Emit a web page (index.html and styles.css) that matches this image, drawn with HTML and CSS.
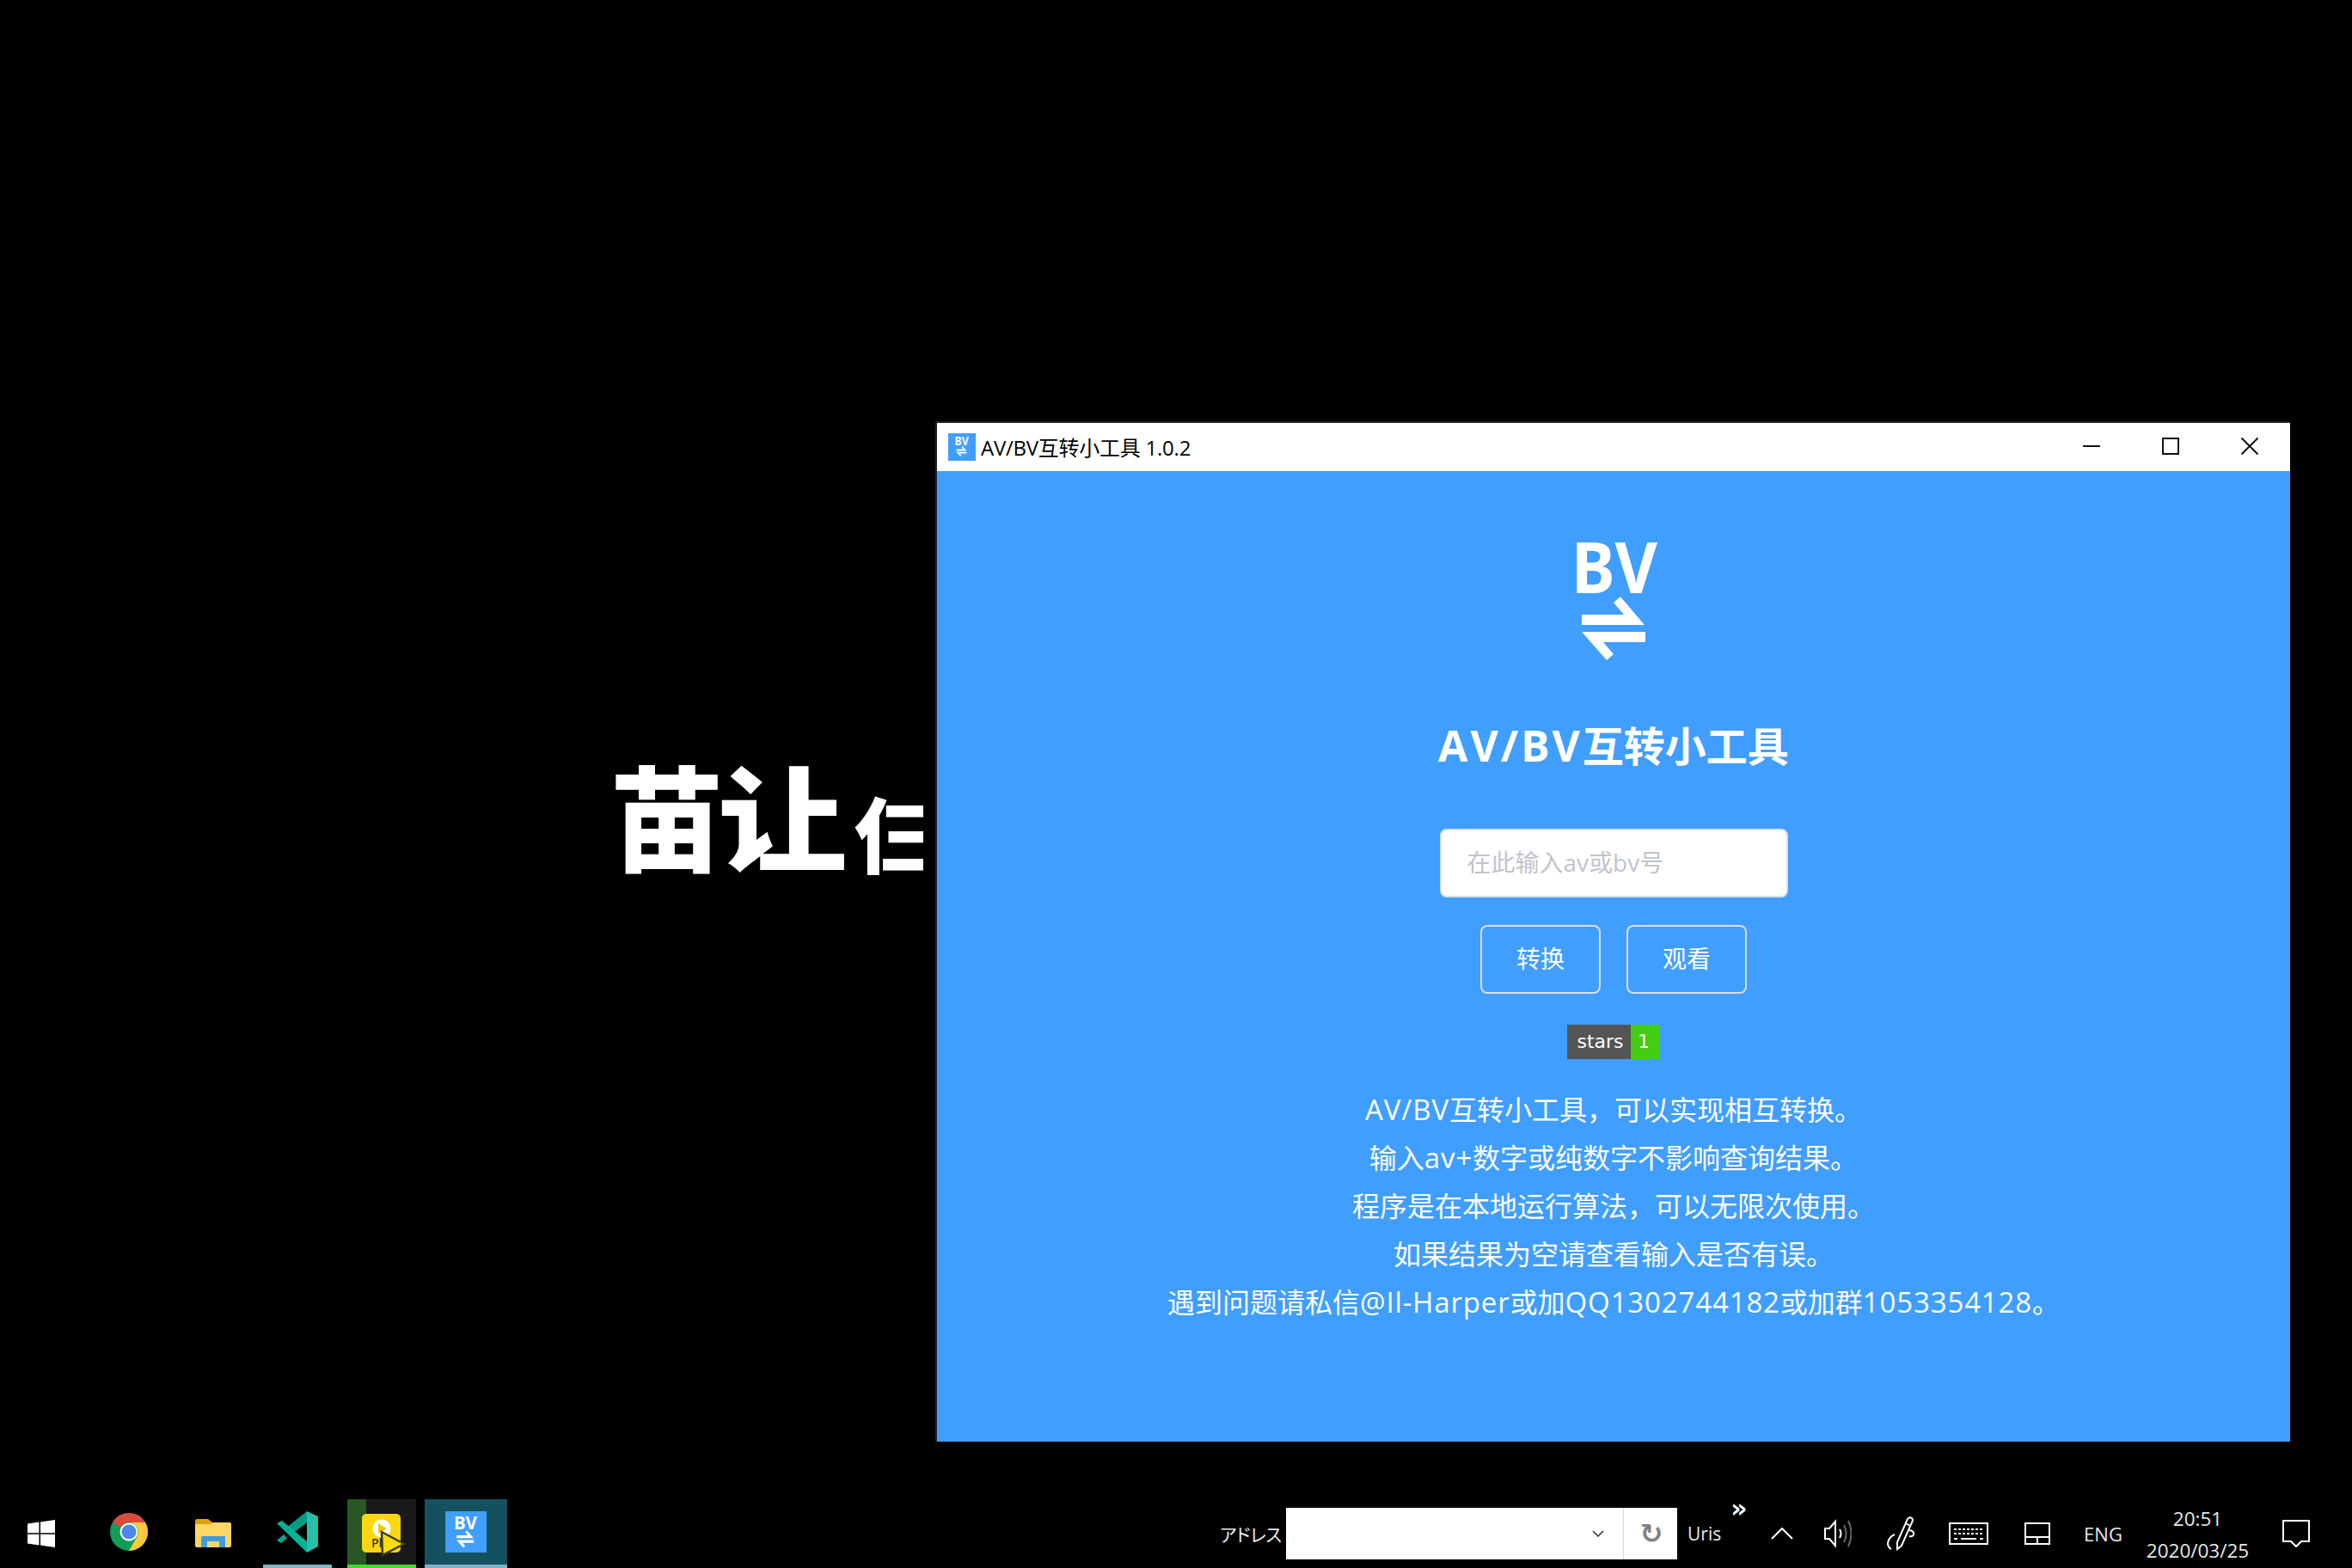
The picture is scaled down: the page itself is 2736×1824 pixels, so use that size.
FILE: index.html
```html
<!DOCTYPE html>
<html lang="zh-CN">
<head>
<meta charset="utf-8">
<title>AV/BV互转小工具</title>
<link rel="stylesheet" href="styles.css">
</head>
<body>
<main class="desktop">
  <div class="wallpaper-text"><span class="glyph-a">苗</span><span class="glyph-b">让</span><span class="glyph-c">仨</span></div>
  <section class="window">
    <header class="titlebar">
      <span class="app-tile"><svg class="app-tile-logo" viewBox="-8 -6 110 148">
        <text class="bv-text" x="-5" y="58" textLength="100" lengthAdjust="spacingAndGlyphs">BV</text>
        <polygon class="bv-arrow" points="7,83 56,83 44,69 52,62 80,95 7,95"/>
        <polygon class="bv-arrow" points="7,103 81,103 81,115 32,115 44,129 36,136"/>
      </svg></span>
      <span class="title-text">AV/BV互转小工具 1.0.2</span>
      <span class="win-controls">
        <svg class="win-btn" viewBox="0 0 20 20"><path d="M0 10H20"/></svg>
        <svg class="win-btn" viewBox="0 0 20 20"><rect x="1" y="1" width="18" height="18"/></svg>
        <svg class="win-btn" viewBox="0 0 20 20"><path d="M0.5 0.5L19.5 19.5M19.5 0.5L0.5 19.5"/></svg>
      </span>
    </header>
    <div class="content">
      <svg class="logo" viewBox="-8 -6 110 148">
        <text class="bv-text" x="-5" y="58" textLength="100" lengthAdjust="spacingAndGlyphs">BV</text>
        <polygon class="bv-arrow" points="7,83 56,83 44,69 52,62 80,95 7,95"/>
        <polygon class="bv-arrow" points="7,103 81,103 81,115 32,115 44,129 36,136"/>
      </svg>
      <h1 class="heading"><span class="heading-latin">AV/BV</span>互转小工具</h1>
      <input class="bv-input" type="text" placeholder="在此输入av或bv号">
      <div class="actions">
        <button class="action">转换</button>
        <button class="action">观看</button>
      </div>
      <div class="badge"><span class="badge-label">stars</span><span class="badge-count">1</span></div>
      <div class="notes">
        <p><span class="latin">AV/BV</span>互转小工具，可以实现相互转换。</p>
        <p>输入<span class="latin">av+</span>数字或纯数字不影响查询结果。</p>
        <p>程序是在本地运行算法，可以无限次使用。</p>
        <p>如果结果为空请查看输入是否有误。</p>
        <p>遇到问题请私信<span class="latin">@Il-Harper</span>或加<span class="latin">QQ1302744182</span>或加群<span class="latin">1053354128</span>。</p>
      </div>
    </div>
  </section>
</main>
<footer class="taskbar">
  <div class="task-left">
    <div class="start">
      <svg class="ic-win" viewBox="0 0 32 32"><path d="M0 4.500L13.500 2.600V15.300H0ZM15 2.400L32 0V15.300H15ZM0 16.800H13.500V29.400L0 27.500ZM15 16.800H32V32L15 29.600Z"/></svg>
    </div>
    <div class="task-gap"></div>
    <div class="slot"><div class="task plain">
      <svg class="ic-chrome" viewBox="0 0 44 44">
        <circle cx="22" cy="22" r="22" fill="#0f9d58"/>
        <path d="M22 0A22 22 0 0 1 41 11H22A11 11 0 0 0 12.500 16.500L3 11A22 22 0 0 1 22 0Z" fill="#db4a3e"/>
        <path d="M41 11A22 22 0 0 1 22 44L31.500 27.500A11 11 0 0 0 22 11Z" fill="#fdc93c"/>
        <circle cx="22" cy="22" r="10.500" fill="#fff"/>
        <circle cx="22" cy="22" r="8.500" fill="#4f86ec"/>
      </svg>
    </div></div>
    <div class="slot"><div class="task plain">
      <svg class="ic-folder" viewBox="0 0 42 33">
        <path d="M0 3Q0 0 2 0H15L20 4H30V12H0Z" fill="#e0a100"/>
        <path d="M0 6H18L21 4H40Q42 4 42 6V31Q42 33 40 33H2Q0 33 0 31Z" fill="#ffd766"/>
        <path d="M7 33V21Q7 20 8 20H34Q35 20 35 21V33H28V26H14V33Z" fill="#3f9bdc"/>
      </svg>
    </div></div>
    <div class="slot"><div class="task open">
      <svg class="ic-code" viewBox="0 0 48 48">
        <polygon points="35,0 48,6 48,41 35,48" fill="#27c0a7"/>
        <polygon points="35,0 35,13 17,27 10,20" fill="#009c85"/>
        <polygon points="0,14 6,11 35,35 35,48" fill="#00b296"/>
        <polygon points="0,34 8,27 12,31 5,37" fill="#00a98e"/>
      </svg>
    </div></div>
    <div class="slot"><div class="task active">
      <span class="task-green"></span>
      <svg class="ic-play" viewBox="0 0 52 56">
        <rect x="1" y="7" width="45" height="45" rx="5" fill="#fbd712"/>
        <circle cx="24" cy="24" r="10.500" fill="#fff"/>
        <polygon points="20,18 30,24 20,30" fill="#f0c800"/>
        <text class="play-text" x="12" y="46">Pla</text>
        <polygon points="24,28 50,42 25,55" fill="#f7de00" stroke="#3a3a28" stroke-width="2.500"/>
      </svg>
    </div></div>
    <div class="slot slot-wide"><div class="task focused">
      <span class="bv-tile"><svg class="bv-tile-logo" viewBox="-8 -6 110 148">
        <text class="bv-text" x="-5" y="58" textLength="100" lengthAdjust="spacingAndGlyphs">BV</text>
        <polygon class="bv-arrow" points="7,83 56,83 44,69 52,62 80,95 7,95"/>
        <polygon class="bv-arrow" points="7,103 81,103 81,115 32,115 44,129 36,136"/>
      </svg></span>
    </div></div>
  </div>
  <div class="task-right">
    <span class="tb-text addr-label">アドレス</span>
    <div class="addr-box">
      <div class="addr-field"><svg class="addr-chev" viewBox="0 0 14 8"><path d="M1 1L7 7L13 1"/></svg></div>
      <div class="addr-go">↻</div>
    </div>
    <span class="tb-text uris">Uris</span>
    <span class="more">»</span>
    <svg class="tray caret" viewBox="0 0 26 14"><path d="M1 13L13 1L25 13"/></svg>
    <svg class="tray speaker" viewBox="0 0 32 34">
      <path d="M1 11H6L13 3V31L6 23H1Z"/>
      <path d="M18 12Q21 17 18 22"/>
      <path class="dim" d="M23 7Q28 17 23 27"/>
      <path class="dim" d="M28 2Q35 17 28 32"/>
    </svg>
    <svg class="tray pen" viewBox="0 0 32 40">
      <path d="M12 30L24 3Q26 0 29 2Q31 4 29 7L17 34L12 38Z"/>
      <path d="M22 8L27 11"/>
      <path d="M9 21Q2 24 1 31Q1 36 5 38"/>
      <path d="M26 16Q32 17 31 21Q30 24 26 23"/>
    </svg>
    <svg class="tray keyboard" viewBox="0 0 46 26">
      <rect x="1" y="1" width="44" height="24"/>
      <path class="dash" d="M6 8H40M6 13H40"/>
      <path d="M6 19H10M14 19H32M36 19H40"/>
    </svg>
    <svg class="tray touchpad" viewBox="0 0 30 26">
      <rect x="1" y="1" width="28" height="24"/>
      <path d="M1 17H29M15 17V25"/>
    </svg>
    <span class="tb-text eng">ENG</span>
    <div class="clock"><span>20:51</span><span>2020/03/25</span></div>
    <svg class="tray notify" viewBox="0 0 32 32"><path d="M1 1H31V25H22L16 31L10 25H1Z"/></svg>
  </div>
</footer>
</body>
</html>
```
FILE: styles.css
```css
* { box-sizing: border-box; }
html, body { margin: 0; height: 100%; }
body {
  background: #000;
  display: flex;
  flex-direction: column;
  height: 1824px;
  overflow: hidden;
  font-family: "Open Sans", "Noto Sans CJK SC", sans-serif;
}
.desktop { position: relative; flex: 1; }

.wallpaper-text {
  position: absolute;
  left: 710px;
  top: 861px;
  display: flex;
  align-items: flex-start;
  white-space: nowrap;
  color: #fff;
  font: 900 132px/170px "Noto Sans CJK SC", sans-serif;
}
.glyph-a { display: block; }
.glyph-b {
  display: block;
  transform: scaleX(1.14);
  margin-left: 2px;
}
.glyph-c {
  display: block;
  width: 80px;
  height: 170px;
  margin-left: 18px;
  margin-top: 21px;
  overflow: hidden;
  font-size: 96px;
}

.window {
  position: absolute;
  left: 1088px;
  top: 490px;
  width: 1576px;
  height: 1187px;
  display: flex;
  flex-direction: column;
  border-left: 2px solid #222;
  border-top: 2px solid #222;
}
.titlebar {
  height: 56px;
  background: #fff;
  display: flex;
  align-items: center;
  padding-left: 13px;
}
.app-tile {
  width: 32px;
  height: 32px;
  background: #409eff;
  display: flex;
  align-items: center;
  justify-content: center;
}
.app-tile-logo { width: 18px; height: 24px; }
.title-text {
  margin-left: 6px;
  margin-bottom: 2px;
  font-size: 24px;
  color: #000;
  white-space: nowrap;
  font-weight: 400;
  letter-spacing: -0.25px;
}
.win-controls {
  margin-left: auto;
  display: flex;
  gap: 72px;
  padding-right: 37px;
  padding-bottom: 2px;
  align-items: center;
}
.win-btn { width: 20px; height: 20px; fill: none; stroke: #111; stroke-width: 2; }

.content {
  flex: 1;
  background: #409eff;
  color: #fff;
  display: flex;
  flex-direction: column;
  align-items: center;
  padding-top: 78px;
}
.logo { width: 110px; height: 148px; flex: none; display: block; margin-left: 6px; }
.bv-text { font: 700 82px "Noto Sans", sans-serif; fill: #fff; }
.bv-arrow { fill: #fff; }
.heading {
  margin: 62px 0 0;
  font-size: 48px;
  line-height: 64px;
  font-weight: 700;
  white-space: nowrap;
}
.heading-latin { font-size: 50px; line-height: 1; letter-spacing: 2.8px; }
.bv-input {
  margin-top: 64px;
  width: 405px;
  height: 80px;
  padding: 0 30px 3px;
  border: 2px solid #dcdfe6;
  border-radius: 8px;
  background: #fff;
  font: 28px "Open Sans", "Noto Sans CJK SC", sans-serif;
}
.bv-input::placeholder { color: #c0c4cc; opacity: 1; }
.actions { margin-top: 32px; display: flex; gap: 30px; }
.action {
  width: 140px;
  height: 80px;
  border: 2px solid #dcdfe6;
  border-radius: 8px;
  background: transparent;
  color: #fff;
  font: 28px "Noto Sans CJK SC", sans-serif;
  padding: 0 0 4px;
}
.badge {
  margin-top: 36px;
  height: 40px;
  display: flex;
  font: 22px/40px "DejaVu Sans", sans-serif;
}
.badge-label { width: 74px; padding-left: 3px; background: #555; text-align: center; }
.badge-count { width: 34px; padding-right: 4px; background: #4c1; text-align: center; }
.notes { margin-top: 31px; font-size: 32px; line-height: 56px; text-align: center; white-space: nowrap; }
.notes p { margin: 0; }
.latin { font-size: 33px; line-height: 1; letter-spacing: 0.85px; }

.taskbar { height: 80px; display: flex; color: #fff; flex: none; }
.task-left { display: flex; }
.start { width: 96px; display: flex; align-items: center; justify-content: center; }
.ic-win { width: 32px; height: 32px; fill: #fff; }
.task-gap { width: 5px; }
.slot { width: 98px; padding: 0 9px; }
.slot-wide { padding: 0 1px; }
.task {
  position: relative;
  height: 80px;
  display: flex;
  align-items: center;
  justify-content: center;
  border-bottom: 4px solid transparent;
}
.plain { border-bottom-color: transparent; }
.open { border-bottom-color: #83b4c6; }
.active { background: #191919; border-bottom-color: #3fdc2e; }
.focused { background: #14515f; border-bottom-color: #7fb2c4; }
.task-green { position: absolute; left: 0; top: 0; bottom: 0; width: 22px; background: #2a5723; }
.ic-chrome { width: 44px; height: 44px; }
.ic-folder { width: 42px; height: 33px; margin-top: 2px; }
.ic-code { width: 48px; height: 48px; }
.ic-play { position: relative; width: 52px; height: 56px; margin-left: 4px; }
.play-text { font: 600 14px "Open Sans", sans-serif; fill: #333; }
.bv-tile {
  width: 48px;
  height: 48px;
  background: #409eff;
  display: flex;
  align-items: center;
  justify-content: center;
}
.bv-tile-logo { width: 30px; height: 40px; }

.task-right { margin-left: auto; display: flex; align-items: center; padding-right: 49px; }
.tb-text { font-size: 22px; white-space: nowrap; text-align: center; color: #e8e8e8; }
.addr-label {
  width: 70px;
  font: 21px "Noto Sans CJK JP", sans-serif;
  font-feature-settings: "palt";
  letter-spacing: -0.5px;
}
.addr-box { margin-left: 7px; width: 455px; height: 60px; background: #fff; display: flex; }
.addr-field {
  flex: 1;
  display: flex;
  align-items: center;
  justify-content: flex-end;
  padding-right: 22px;
  border-right: 1px solid #d9d9d9;
}
.addr-chev { width: 14px; height: 8px; fill: none; stroke: #333; stroke-width: 1.5; }
.addr-go {
  width: 62px;
  padding-left: 2px;
  text-align: center;
  font: 700 32px/60px "DejaVu Sans", sans-serif;
  color: #808080;
}
.uris { width: 38px; margin-left: 12px; font-size: 21px; }
.more {
  width: 20px;
  margin-left: 12px;
  align-self: flex-start;
  margin-top: -4px;
  font: 700 30px/30px "DejaVu Sans", sans-serif;
  text-align: center;
}
.tray { flex: none; fill: none; stroke: #fff; stroke-width: 2; }
.caret { width: 26px; height: 14px; margin-left: 27px; }
.speaker { width: 32px; height: 34px; margin-left: 36px; }
.speaker .dim { stroke: #666; }
.pen { width: 32px; height: 40px; margin-left: 41px; }
.keyboard { width: 46px; height: 26px; margin-left: 40px; }
.dash { stroke-dasharray: 3 2; }
.touchpad { width: 30px; height: 26px; margin-left: 42px; }
.eng { width: 45px; margin-left: 39px; }
.clock {
  width: 121px;
  margin-left: 27px;
  display: flex;
  flex-direction: column;
  align-items: center;
  font-size: 22.5px;
  line-height: 37px;
  white-space: nowrap;
  color: #e8e8e8;
  margin-top: 1px;
}
.notify { width: 32px; height: 32px; margin-left: 38px; }
```
